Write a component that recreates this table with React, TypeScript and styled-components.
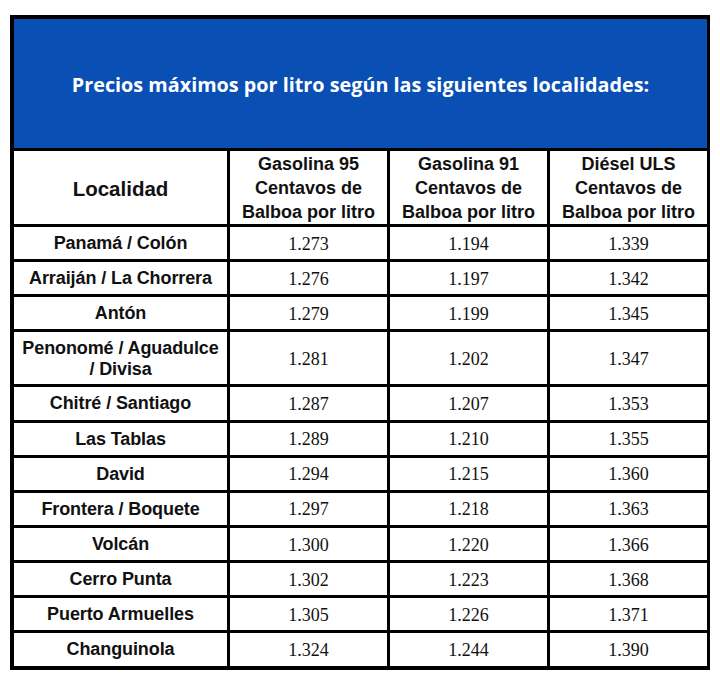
import React from "react";
import styled, { createGlobalStyle } from "styled-components";

interface IRow {
  name: string;
  g95: string;
  g91: string;
  diesel: string;
  tall?: boolean;
}

const rows: IRow[] = [
  { name: "Panamá / Colón", g95: "1.273", g91: "1.194", diesel: "1.339" },
  { name: "Arraiján / La Chorrera", g95: "1.276", g91: "1.197", diesel: "1.342" },
  { name: "Antón", g95: "1.279", g91: "1.199", diesel: "1.345" },
  {
    name: "Penonomé / Aguadulce / Divisa",
    g95: "1.281",
    g91: "1.202",
    diesel: "1.347",
    tall: true,
  },
  { name: "Chitré / Santiago", g95: "1.287", g91: "1.207", diesel: "1.353" },
  { name: "Las Tablas", g95: "1.289", g91: "1.210", diesel: "1.355" },
  { name: "David", g95: "1.294", g91: "1.215", diesel: "1.360" },
  { name: "Frontera / Boquete", g95: "1.297", g91: "1.218", diesel: "1.363" },
  { name: "Volcán", g95: "1.300", g91: "1.220", diesel: "1.366" },
  { name: "Cerro Punta", g95: "1.302", g91: "1.223", diesel: "1.368" },
  { name: "Puerto Armuelles", g95: "1.305", g91: "1.226", diesel: "1.371" },
  { name: "Changuinola", g95: "1.324", g91: "1.244", diesel: "1.390" },
];

const fuels = ["Gasolina 95", "Gasolina 91", "Diésel ULS"];

const GlobalStyle = createGlobalStyle`
  *, *::before, *::after {
    box-sizing: border-box;
  }
  body {
    margin: 0;
    background: #fff;
    font-family: "Liberation Sans", Arial, sans-serif;
  }
`;

const Page = styled.div`
  padding: 15px 0 0 10px;
`;

const Sheet = styled.div`
  width: 700px;
  display: grid;
  grid-template-columns: 213px 157px 157px 157px;
  grid-auto-rows: auto;
  gap: 3px;
  background: #000;
  border: 3px solid #000;
  border-top-width: 4px;
  border-left-width: 4px;
  border-bottom-width: 4px;
`;

const Banner = styled.div`
  grid-column: 1 / -1;
  height: 129px;
  background: #0a4fb4;
  color: #fff;
  font-family: "Open Sans", Lato, sans-serif;
  font-weight: 700;
  font-size: 19.8px;
  display: flex;
  align-items: center;
  justify-content: center;
  padding-top: 2px;
`;

const Cell = styled.div<{ $tall?: boolean }>`
  background: #fff;
  color: #111;
  display: flex;
  align-items: center;
  justify-content: center;
  text-align: center;
  height: ${(p) => (p.$tall ? "52px" : "32.15px")};
`;

const HeadCell = styled(Cell)`
  height: 73px;
  font-weight: 700;
  font-size: 18px;
  line-height: 24px;
  padding-top: 1px;
`;

const LocalidadHead = styled(HeadCell)`
  font-size: 20.5px;
  padding-top: 2px;
`;

const Name = styled(Cell)`
  font-weight: 700;
  font-size: 18px;
  line-height: 21px;
  letter-spacing: -0.1px;
  padding: 1px 4px 0;
`;

const Price = styled(Cell)`
  font-family: "Liberation Serif", "Times New Roman", serif;
  font-size: 18px;
  padding-top: 2px;
`;

const App: React.FC = () => {
  return (
    <>
      <GlobalStyle />
      <Page>
        <Sheet>
          <Banner>Precios máximos por litro según las siguientes localidades:</Banner>
          <LocalidadHead>Localidad</LocalidadHead>
          {fuels.map((f) => (
            <HeadCell key={f}>
              {f}
              <br />
              Centavos de
              <br />
              Balboa por litro
            </HeadCell>
          ))}
          {rows.map((r) => (
            <React.Fragment key={r.name}>
              <Name $tall={r.tall}>{r.name}</Name>
              <Price $tall={r.tall}>{r.g95}</Price>
              <Price $tall={r.tall}>{r.g91}</Price>
              <Price $tall={r.tall}>{r.diesel}</Price>
            </React.Fragment>
          ))}
        </Sheet>
      </Page>
    </>
  );
};

export default App;
